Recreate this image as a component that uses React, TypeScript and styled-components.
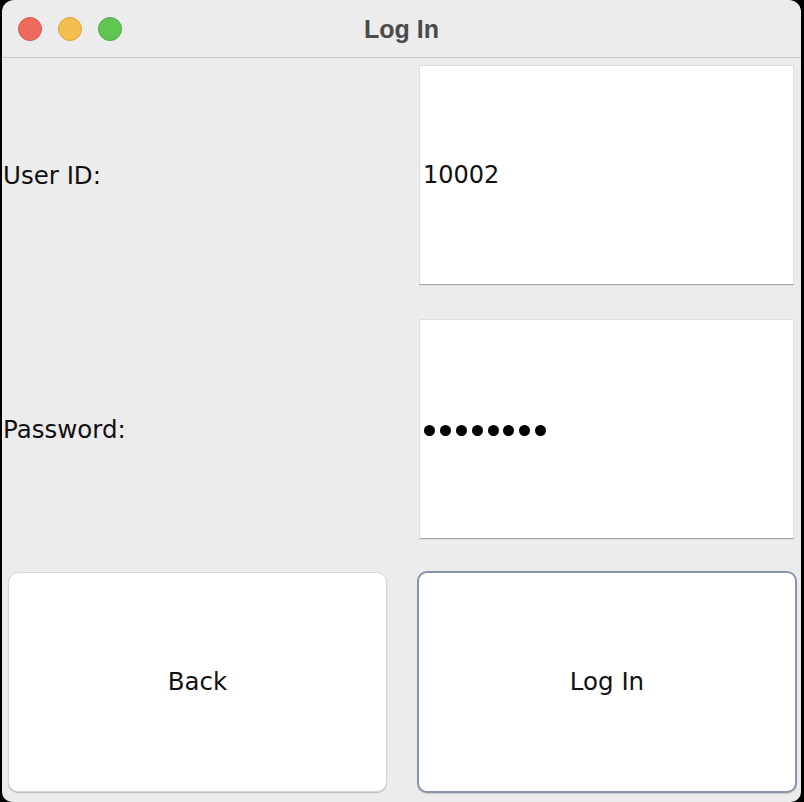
import styled, { createGlobalStyle } from "styled-components";

const GlobalStyle = createGlobalStyle`
  html, body {
    margin: 0;
    padding: 0;
    background: #000;
  }
  #root {
    width: 804px;
    height: 802px;
  }
`;

const Window = styled.div`
  margin-left: 2px;
  width: 799px;
  height: 802px;
  background: #ececec;
  border-radius: 12px 12px 10px 10px;
  overflow: hidden;
  display: flex;
  flex-direction: column;
  font-family: "DejaVu Sans", "Noto Sans", sans-serif;
`;

const TitleBar = styled.div`
  position: relative;
  height: 57px;
  flex: none;
  display: flex;
  align-items: center;
  justify-content: center;
  border-bottom: 1px solid #c9c9c9;
`;

const Lights = styled.div`
  position: absolute;
  left: 16px;
  top: 17px;
  display: flex;
  gap: 16px;
`;

const Light = styled.span<{ $fill: string; $edge: string }>`
  width: 24px;
  height: 24px;
  border-radius: 50%;
  box-sizing: border-box;
  background: ${(p) => p.$fill};
  border: 1px solid ${(p) => p.$edge};
`;

const Title = styled.div`
  font-family: "Liberation Sans", Arial, sans-serif;
  font-weight: bold;
  font-size: 25px;
  color: #4b4b4b;
  margin-top: 2px;
`;

const Form = styled.div`
  flex: 1;
  display: grid;
  grid-template-columns: 401px 398px;
  grid-template-rows: 220px 220px 222px;
  row-gap: 34px;
  padding-top: 7px;
  align-content: start;
`;

const Label = styled.div`
  display: flex;
  align-items: center;
  padding-left: 1px;
  font-size: 24.5px;
  color: #111;
`;

const Field = styled.div`
  margin: 0 7px 0 16px;
  background: #fff;
  border: 1px solid #dedede;
  border-bottom: 1px solid #a9a9a9;
  box-shadow: 0 1px 0 rgba(0, 0, 0, 0.06);
  display: flex;
  align-items: center;
  padding-left: 3px;
  font-size: 24px;
  color: #111;
`;

const Dots = styled.div`
  display: flex;
  gap: 4.9px;
  padding-left: 1px;
  margin-top: 2px;
`;

const Dot = styled.span`
  width: 11px;
  height: 11px;
  border-radius: 50%;
  background: #000;
`;

const Button = styled.button<{ $primary?: boolean }>`
  margin: ${(p) => (p.$primary ? "-2px 4px 2px 14px" : "-1px 16px 3px 6px")};
  background: #fff;
  border: ${(p) => (p.$primary ? "2px solid #8796a9" : "1px solid #d6d6d6")};
  border-radius: 10px;
  box-shadow: ${(p) =>
    p.$primary ? "0 1px 1px rgba(0,0,0,0.15)" : "0 1px 1px rgba(0,0,0,0.22)"};
  font-family: "DejaVu Sans", "Noto Sans", sans-serif;
  font-size: 24.5px;
  color: #111;
  padding: 0 0 2px;
  cursor: pointer;
`;

export default function App() {
  return (
    <>
      <GlobalStyle />
      <Window>
        <TitleBar>
          <Lights>
            <Light $fill="#ee6a5e" $edge="#d4574c" />
            <Light $fill="#f5bf4f" $edge="#d9a53b" />
            <Light $fill="#61c554" $edge="#4fa943" />
          </Lights>
          <Title>Log In</Title>
        </TitleBar>
        <Form>
          <Label>User ID:</Label>
          <Field>10002</Field>
          <Label>Password:</Label>
          <Field aria-label="password">
            <Dots>
              {Array.from({ length: 8 }).map((_, i) => (
                <Dot key={i} />
              ))}
            </Dots>
          </Field>
          <Button>Back</Button>
          <Button $primary>Log In</Button>
        </Form>
      </Window>
    </>
  );
}
